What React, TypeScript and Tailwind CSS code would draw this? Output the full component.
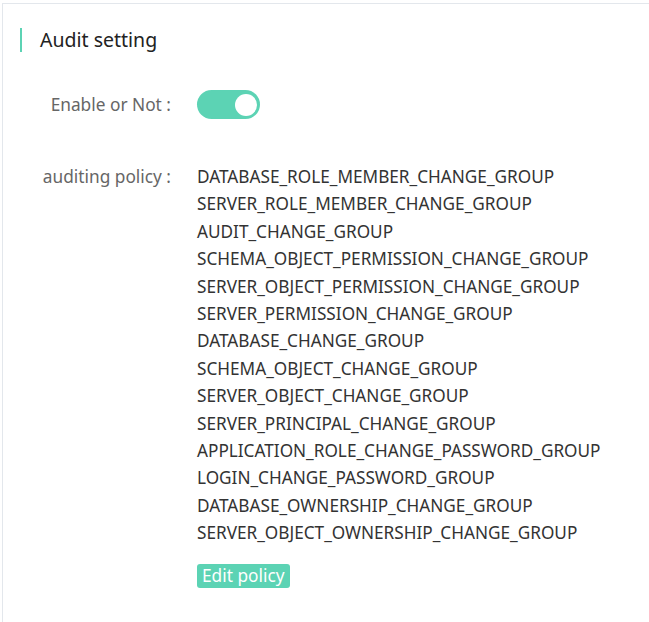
const policies = [
  "DATABASE_ROLE_MEMBER_CHANGE_GROUP",
  "SERVER_ROLE_MEMBER_CHANGE_GROUP",
  "AUDIT_CHANGE_GROUP",
  "SCHEMA_OBJECT_PERMISSION_CHANGE_GROUP",
  "SERVER_OBJECT_PERMISSION_CHANGE_GROUP",
  "SERVER_PERMISSION_CHANGE_GROUP",
  "DATABASE_CHANGE_GROUP",
  "SCHEMA_OBJECT_CHANGE_GROUP",
  "SERVER_OBJECT_CHANGE_GROUP",
  "SERVER_PRINCIPAL_CHANGE_GROUP",
  "APPLICATION_ROLE_CHANGE_PASSWORD_GROUP",
  "LOGIN_CHANGE_PASSWORD_GROUP",
  "DATABASE_OWNERSHIP_CHANGE_GROUP",
  "SERVER_OBJECT_OWNERSHIP_CHANGE_GROUP",
]

const App = () => {
  return (
    <div className="min-h-[622px] bg-white pl-[2px] pt-[3px] font-['Noto_Sans',sans-serif]">
      <div className="min-h-[619px] border-l border-t border-[#e3e7ec]">
        <div className="ml-[17px] mt-[24px] flex h-[24px] items-center border-l-2 border-[#5cd3b4] pl-[18px]">
          <h2 className="text-[19.5px] leading-none text-[#222]">Audit setting</h2>
        </div>

        <div className="mt-[38px] flex items-center">
          <span className="w-[168px] text-right text-[17.3px] text-[#666]">Enable or Not :</span>
          <button className="ml-[26px] flex h-[29px] w-[63px] items-center justify-end rounded-full bg-[#5cd3b4] pr-[3px]">
            <span className="h-[22px] w-[22px] rounded-full bg-white" />
          </button>
        </div>

        <div className="mt-[44px] flex items-start">
          <span className="w-[168px] text-right text-[17.3px] leading-[27.4px] text-[#666]">auditing policy :</span>
          <div className="ml-[26px]">
            {policies.map((p) => (
              <div key={p} className="text-[17.2px] leading-[27.4px] text-[#333]">{p}</div>
            ))}
            <button className="mt-[17px] h-[24px] rounded-[3px] bg-[#5cd3b4] px-[5px] text-[17.3px] leading-[24px] text-white">
              Edit policy
            </button>
          </div>
        </div>
      </div>
    </div>
  )
}

export default App
